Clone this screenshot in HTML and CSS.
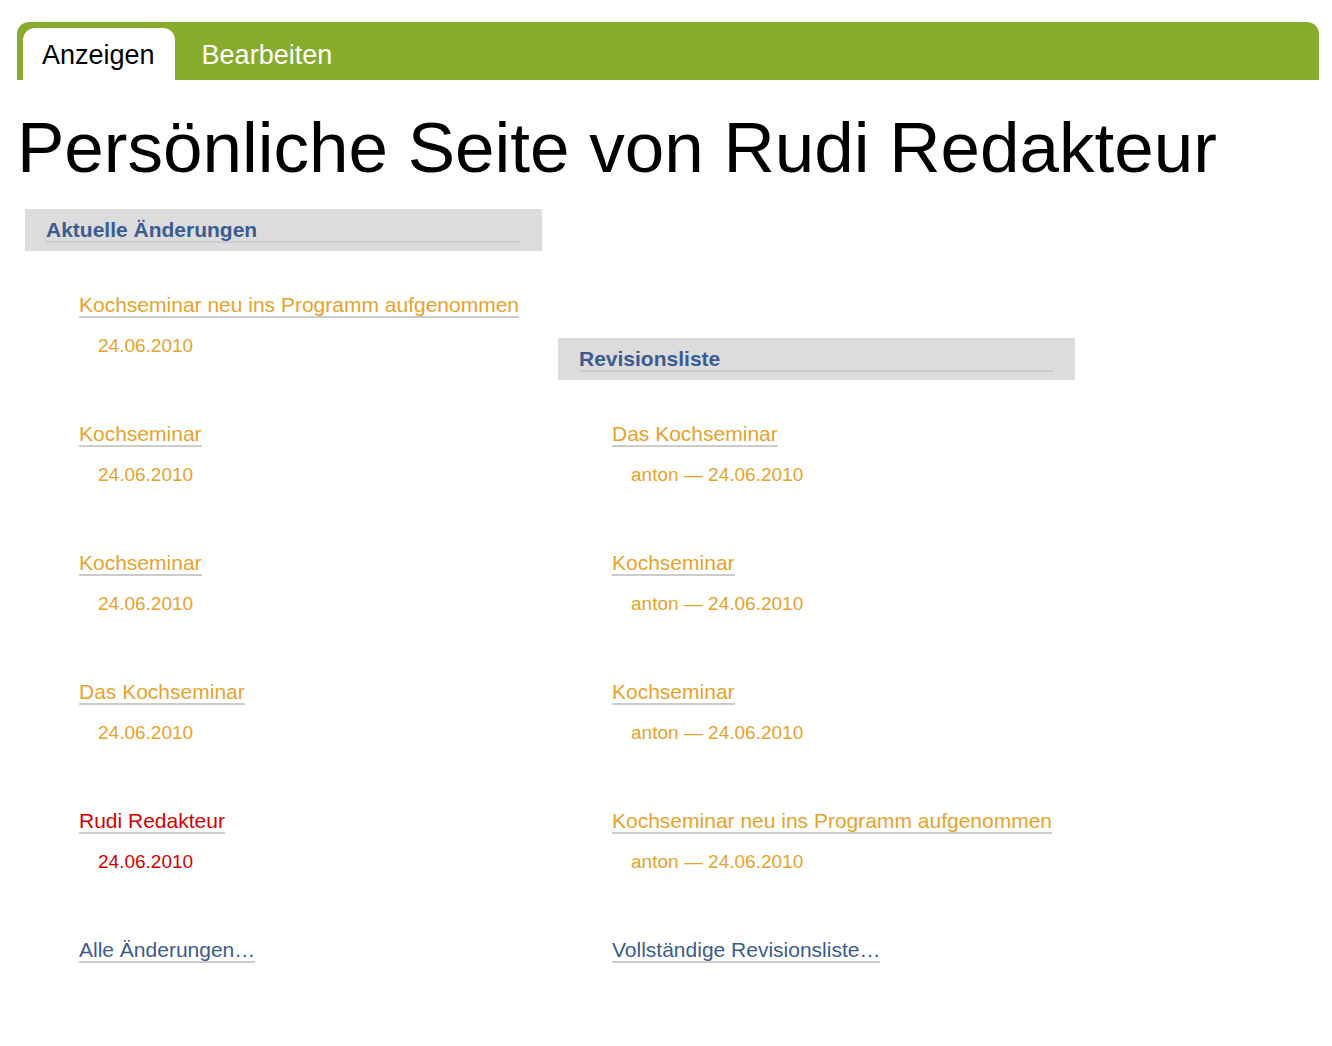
FILE: index.html
```html
<!DOCTYPE html>
<html lang="de">
<head>
<meta charset="utf-8">
<title>Persönliche Seite von Rudi Redakteur</title>
<link rel="stylesheet" href="styles.css">
</head>
<body>
<nav class="tabs">
  <a class="tab tab-active" href="#view">Anzeigen</a>
  <a class="tab" href="#edit">Bearbeiten</a>
</nav>
<main>
  <h1 class="title">Persönliche Seite von Rudi Redakteur</h1>
  <div class="portlets">
    <section class="portlet">
      <h2 class="portlet-header"><a href="#recent">Aktuelle Änderungen</a></h2>
      <ul class="items">
        <li class="item"><a href="#i1">Kochseminar neu ins Programm aufgenommen</a><span class="details">24.06.2010</span></li>
        <li class="item"><a href="#i2">Kochseminar</a><span class="details">24.06.2010</span></li>
        <li class="item"><a href="#i3">Kochseminar</a><span class="details">24.06.2010</span></li>
        <li class="item"><a href="#i4">Das Kochseminar</a><span class="details">24.06.2010</span></li>
        <li class="item item-private"><a href="#i5">Rudi Redakteur</a><span class="details">24.06.2010</span></li>
      </ul>
      <p class="footer"><a href="#all">Alle Änderungen…</a></p>
    </section>
    <section class="portlet">
      <h2 class="portlet-header"><a href="#review">Revisionsliste</a></h2>
      <ul class="items">
        <li class="item"><a href="#r1">Das Kochseminar</a><span class="details">anton — 24.06.2010</span></li>
        <li class="item"><a href="#r2">Kochseminar</a><span class="details">anton — 24.06.2010</span></li>
        <li class="item"><a href="#r3">Kochseminar</a><span class="details">anton — 24.06.2010</span></li>
        <li class="item"><a href="#r4">Kochseminar neu ins Programm aufgenommen</a><span class="details">anton — 24.06.2010</span></li>
      </ul>
      <p class="footer"><a href="#full">Vollständige Revisionsliste…</a></p>
    </section>
  </div>
</main>
</body>
</html>
```
FILE: styles.css
```css
* {
  box-sizing: border-box;
}

body {
  margin: 22px 13px 0 17px;
  background: #fff;
  color: #000;
  font-family: "Liberation Sans", Arial, sans-serif;
}

a {
  color: inherit;
  text-decoration: none;
}

.tabs {
  display: flex;
  gap: 6px;
  padding: 6px 6px 0;
  background: #87ab2b;
  border-radius: 12px 12px 0 0;
}

.tab {
  padding: 2px 21px 0;
  border-radius: 12px 12px 0 0;
  color: #fff;
  font-size: 27px;
  line-height: 50px;
}

.tab-active {
  padding: 2px 20px 0 19px;
  background: #fff;
  color: #000;
}

.title {
  margin: 28px 0 21px;
  font-size: 71px;
  font-weight: 400;
  line-height: 80px;
}

.portlets {
  display: flex;
  align-items: flex-end;
  gap: 16px;
  padding-left: 8px;
}

.portlet {
  flex: 1 1 0;
  max-width: 517px;
}

.portlet-header {
  margin: 0 0 42px;
  padding: 10px 21px 8px;
  background: #dcdcdc;
  color: #3b5c92;
  font-size: 21px;
  line-height: 22px;
}

.portlet-header a {
  display: block;
  border-bottom: 2px solid #ccc;
}

.items {
  margin: 0;
  padding: 0 0 0 54px;
  list-style: none;
}

.item {
  padding-bottom: 65px;
  color: #e8a32c;
}

.item-private {
  color: #d90000;
}

.item a,
.footer a {
  display: inline-block;
  border-bottom: 2px solid #ccc;
  font-size: 21px;
  line-height: 23px;
  vertical-align: top;
}

.details {
  display: block;
  padding: 17px 0 0 19px;
  font-size: 19px;
  line-height: 22px;
}

.footer {
  margin: 0;
  padding-left: 54px;
  color: #3b5c92;
}
```
